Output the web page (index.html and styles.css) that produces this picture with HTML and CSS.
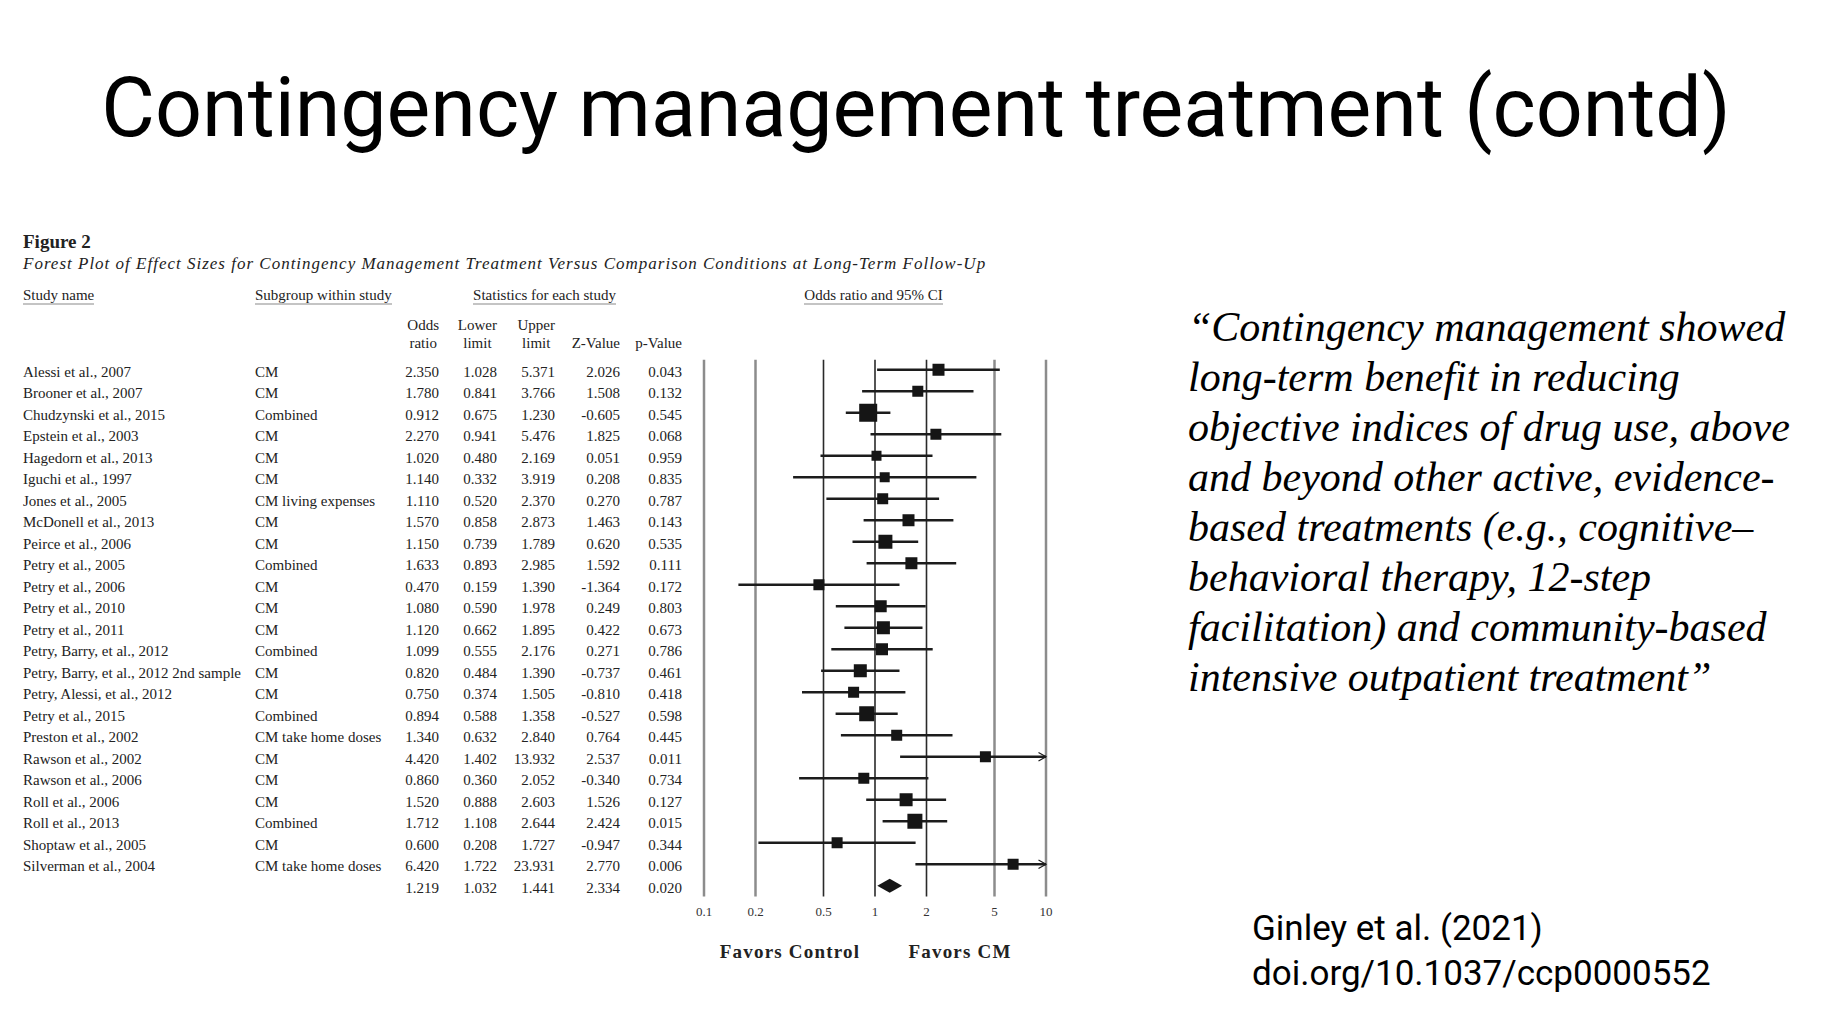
FILE: index.html
```html
<!DOCTYPE html>
<html lang="en">
<head>
<meta charset="utf-8">
<title>Contingency management treatment (contd)</title>
<link rel="stylesheet" href="styles.css">
</head>
<body>
<h1 class="title">Contingency management treatment (contd)</h1>
<main class="content">
  <figure class="fig">
    <div class="fig-label">Figure 2</div>
    <div class="fig-caption">Forest Plot of Effect Sizes for Contingency Management Treatment Versus Comparison Conditions at Long-Term Follow-Up</div>
    <div class="fig-body">
      <div class="tbl">
        <div class="h1"><span class="ul">Study name</span></div>
        <div class="h1"><span class="ul">Subgroup within study</span></div>
        <div class="h1 stats"><span class="ul">Statistics for each study</span></div>

        <div class="h2"></div>
        <div class="h2"></div>
        <div class="h2 v"><span class="hd">Odds<br>ratio</span></div>
        <div class="h2 v"><span class="hd">Lower<br>limit</span></div>
        <div class="h2 v"><span class="hd">Upper<br>limit</span></div>
        <div class="h2 v"><span class="hd low">Z-Value</span></div>
        <div class="h2 v"><span class="hd low">p-Value</span></div>

        <div class="n">Alessi et al., 2007</div><div class="s">CM</div><div class="v">2.350</div><div class="v">1.028</div><div class="v">5.371</div><div class="v">2.026</div><div class="v">0.043</div>
        <div class="n">Brooner et al., 2007</div><div class="s">CM</div><div class="v">1.780</div><div class="v">0.841</div><div class="v">3.766</div><div class="v">1.508</div><div class="v">0.132</div>
        <div class="n">Chudzynski et al., 2015</div><div class="s">Combined</div><div class="v">0.912</div><div class="v">0.675</div><div class="v">1.230</div><div class="v">-0.605</div><div class="v">0.545</div>
        <div class="n">Epstein et al., 2003</div><div class="s">CM</div><div class="v">2.270</div><div class="v">0.941</div><div class="v">5.476</div><div class="v">1.825</div><div class="v">0.068</div>
        <div class="n">Hagedorn et al., 2013</div><div class="s">CM</div><div class="v">1.020</div><div class="v">0.480</div><div class="v">2.169</div><div class="v">0.051</div><div class="v">0.959</div>
        <div class="n">Iguchi et al., 1997</div><div class="s">CM</div><div class="v">1.140</div><div class="v">0.332</div><div class="v">3.919</div><div class="v">0.208</div><div class="v">0.835</div>
        <div class="n">Jones et al., 2005</div><div class="s">CM living expenses</div><div class="v">1.110</div><div class="v">0.520</div><div class="v">2.370</div><div class="v">0.270</div><div class="v">0.787</div>
        <div class="n">McDonell et al., 2013</div><div class="s">CM</div><div class="v">1.570</div><div class="v">0.858</div><div class="v">2.873</div><div class="v">1.463</div><div class="v">0.143</div>
        <div class="n">Peirce et al., 2006</div><div class="s">CM</div><div class="v">1.150</div><div class="v">0.739</div><div class="v">1.789</div><div class="v">0.620</div><div class="v">0.535</div>
        <div class="n">Petry et al., 2005</div><div class="s">Combined</div><div class="v">1.633</div><div class="v">0.893</div><div class="v">2.985</div><div class="v">1.592</div><div class="v">0.111</div>
        <div class="n">Petry et al., 2006</div><div class="s">CM</div><div class="v">0.470</div><div class="v">0.159</div><div class="v">1.390</div><div class="v">-1.364</div><div class="v">0.172</div>
        <div class="n">Petry et al., 2010</div><div class="s">CM</div><div class="v">1.080</div><div class="v">0.590</div><div class="v">1.978</div><div class="v">0.249</div><div class="v">0.803</div>
        <div class="n">Petry et al., 2011</div><div class="s">CM</div><div class="v">1.120</div><div class="v">0.662</div><div class="v">1.895</div><div class="v">0.422</div><div class="v">0.673</div>
        <div class="n">Petry, Barry, et al., 2012</div><div class="s">Combined</div><div class="v">1.099</div><div class="v">0.555</div><div class="v">2.176</div><div class="v">0.271</div><div class="v">0.786</div>
        <div class="n">Petry, Barry, et al., 2012 2nd sample</div><div class="s">CM</div><div class="v">0.820</div><div class="v">0.484</div><div class="v">1.390</div><div class="v">-0.737</div><div class="v">0.461</div>
        <div class="n">Petry, Alessi, et al., 2012</div><div class="s">CM</div><div class="v">0.750</div><div class="v">0.374</div><div class="v">1.505</div><div class="v">-0.810</div><div class="v">0.418</div>
        <div class="n">Petry et al., 2015</div><div class="s">Combined</div><div class="v">0.894</div><div class="v">0.588</div><div class="v">1.358</div><div class="v">-0.527</div><div class="v">0.598</div>
        <div class="n">Preston et al., 2002</div><div class="s">CM take home doses</div><div class="v">1.340</div><div class="v">0.632</div><div class="v">2.840</div><div class="v">0.764</div><div class="v">0.445</div>
        <div class="n">Rawson et al., 2002</div><div class="s">CM</div><div class="v">4.420</div><div class="v">1.402</div><div class="v">13.932</div><div class="v">2.537</div><div class="v">0.011</div>
        <div class="n">Rawson et al., 2006</div><div class="s">CM</div><div class="v">0.860</div><div class="v">0.360</div><div class="v">2.052</div><div class="v">-0.340</div><div class="v">0.734</div>
        <div class="n">Roll et al., 2006</div><div class="s">CM</div><div class="v">1.520</div><div class="v">0.888</div><div class="v">2.603</div><div class="v">1.526</div><div class="v">0.127</div>
        <div class="n">Roll et al., 2013</div><div class="s">Combined</div><div class="v">1.712</div><div class="v">1.108</div><div class="v">2.644</div><div class="v">2.424</div><div class="v">0.015</div>
        <div class="n">Shoptaw et al., 2005</div><div class="s">CM</div><div class="v">0.600</div><div class="v">0.208</div><div class="v">1.727</div><div class="v">-0.947</div><div class="v">0.344</div>
        <div class="n">Silverman et al., 2004</div><div class="s">CM take home doses</div><div class="v">6.420</div><div class="v">1.722</div><div class="v">23.931</div><div class="v">2.770</div><div class="v">0.006</div>
        <div class="n"></div><div class="s"></div><div class="v">1.219</div><div class="v">1.032</div><div class="v">1.441</div><div class="v">2.334</div><div class="v">0.020</div>
      </div>
      <div class="plot">
        <div class="plot-head"><span class="ul">Odds ratio and 95% CI</span></div>
        <svg class="plot-svg" width="383" height="620" viewBox="0 0 383 620" xmlns="http://www.w3.org/2000/svg">
          <g class="axis-light">
            <line x1="22" y1="0.75" x2="22" y2="537.5"/>
            <line x1="73.5" y1="0.75" x2="73.5" y2="537.5"/>
            <line x1="312.5" y1="0.75" x2="312.5" y2="537.5"/>
            <line x1="364" y1="0.75" x2="364" y2="537.5"/>
          </g>
          <g class="axis-dark">
            <line x1="141.5" y1="0.75" x2="141.5" y2="537.5"/>
            <line x1="193" y1="0.75" x2="193" y2="537.5"/>
            <line x1="244.5" y1="0.75" x2="244.5" y2="537.5"/>
          </g>
          <g class="ci">
            <line x1="195.1" y1="10.75" x2="317.8" y2="10.75"/>
            <line x1="180.1" y1="32.25" x2="291.5" y2="32.25"/>
            <line x1="163.8" y1="53.75" x2="208.4" y2="53.75"/>
            <line x1="188.5" y1="75.25" x2="319.3" y2="75.25"/>
            <line x1="138.5" y1="96.75" x2="250.5" y2="96.75"/>
            <line x1="111.1" y1="118.25" x2="294.4" y2="118.25"/>
            <line x1="144.4" y1="139.75" x2="257.1" y2="139.75"/>
            <line x1="181.6" y1="161.25" x2="271.4" y2="161.25"/>
            <line x1="170.5" y1="182.75" x2="236.2" y2="182.75"/>
            <line x1="184.6" y1="204.25" x2="274.2" y2="204.25"/>
            <line x1="56.4" y1="225.75" x2="217.5" y2="225.75"/>
            <line x1="153.8" y1="247.25" x2="243.7" y2="247.25"/>
            <line x1="162.4" y1="268.75" x2="240.5" y2="268.75"/>
            <line x1="149.3" y1="290.25" x2="250.7" y2="290.25"/>
            <line x1="139.1" y1="311.75" x2="217.5" y2="311.75"/>
            <line x1="120.0" y1="333.25" x2="223.4" y2="333.25"/>
            <line x1="153.6" y1="354.75" x2="215.7" y2="354.75"/>
            <line x1="158.9" y1="376.25" x2="270.5" y2="376.25"/>
            <line x1="218.1" y1="397.75" x2="364" y2="397.75"/>
            <line x1="117.1" y1="419.25" x2="246.4" y2="419.25"/>
            <line x1="184.2" y1="440.75" x2="264.1" y2="440.75"/>
            <line x1="200.6" y1="462.25" x2="265.2" y2="462.25"/>
            <line x1="76.4" y1="483.75" x2="233.6" y2="483.75"/>
            <line x1="233.4" y1="505.25" x2="364" y2="505.25"/>
          </g>
          <g class="arrow">
            <path d="M356.5 393.5 L364 397.75 L356.5 402"/>
            <path d="M356.5 501 L364 505.25 L356.5 509.5"/>
          </g>
          <g class="pt">
            <rect x="250.5" y="4.75" width="12" height="12"/>
            <rect x="230.3" y="26.75" width="11" height="11"/>
            <rect x="177.2" y="44.75" width="18" height="18"/>
            <rect x="248.4" y="69.75" width="11" height="11"/>
            <rect x="189.5" y="91.75" width="10" height="10"/>
            <rect x="197.7" y="113.25" width="10" height="10"/>
            <rect x="195.2" y="134.25" width="11" height="11"/>
            <rect x="220.5" y="155.25" width="12" height="12"/>
            <rect x="196.4" y="175.75" width="14" height="14"/>
            <rect x="223.4" y="198.25" width="12" height="12"/>
            <rect x="131.4" y="220.25" width="11" height="11"/>
            <rect x="192.7" y="241.25" width="12" height="12"/>
            <rect x="194.9" y="262.25" width="13" height="13"/>
            <rect x="194.0" y="284.25" width="12" height="12"/>
            <rect x="171.8" y="305.25" width="13" height="13"/>
            <rect x="166.1" y="327.75" width="11" height="11"/>
            <rect x="177.2" y="347.25" width="15" height="15"/>
            <rect x="209.2" y="370.75" width="11" height="11"/>
            <rect x="297.9" y="392.25" width="11" height="11"/>
            <rect x="176.3" y="413.75" width="11" height="11"/>
            <rect x="217.6" y="434.25" width="13" height="13"/>
            <rect x="225.4" y="454.75" width="15" height="15"/>
            <rect x="149.6" y="478.25" width="11" height="11"/>
            <rect x="325.6" y="499.75" width="11" height="11"/>
          </g>
          <path class="diamond" d="M195.3 526.75 L207.7 519.75 L220.1 526.75 L207.7 533.75 Z"/>
          <g class="tick">
            <text x="22" y="552.75">0.1</text>
            <text x="73.5" y="552.75">0.2</text>
            <text x="141.5" y="552.75">0.5</text>
            <text x="193" y="552.75">1</text>
            <text x="244.5" y="552.75">2</text>
            <text x="312.5" y="552.75">5</text>
            <text x="364" y="552.75">10</text>
          </g>
          <g class="favors">
            <text x="108" y="592.75">Favors Control</text>
            <text x="278" y="592.75">Favors CM</text>
          </g>
        </svg>
      </div>
    </div>
  </figure>
  <aside class="side">
    <blockquote class="quote">“Contingency management showed<br>long-term benefit in reducing<br>objective indices of drug use, above<br>and beyond other active, evidence-<br>based treatments (e.g., cognitive–<br>behavioral therapy, 12-step<br>facilitation) and community-based<br>intensive outpatient treatment”</blockquote>
    <p class="cite">Ginley et al. (2021)<br>doi.org/10.1037/ccp0000552</p>
  </aside>
</main>
</body>
</html>
```

FILE: styles.css
```css
html, body {
  margin: 0;
  padding: 0;
}
body {
  width: 1832px;
  height: 1021px;
  overflow: hidden;
  background: #ffffff;
  color: #000000;
  font-family: "Liberation Serif", "Times New Roman", serif;
}

.title {
  margin: 0;
  padding-top: 58px;
  font-family: Roboto, "Liberation Sans", sans-serif;
  font-weight: 400;
  font-size: 82.5px;
  line-height: 100px;
  text-align: center;
  color: #000;
}

.content {
  display: flex;
  align-items: flex-start;
  padding-left: 23px;
  margin-top: 73px;
}

/* ---------- figure ---------- */
.fig {
  margin: 0;
  width: 1042px;
  color: #222222;
}
.fig-label {
  font-size: 19px;
  font-weight: 700;
  line-height: 22px;
}
.fig-caption {
  font-size: 17px;
  font-style: italic;
  line-height: 22px;
  letter-spacing: 1px;
  white-space: nowrap;
}
.fig-body {
  display: flex;
  align-items: flex-start;
}

.tbl {
  display: grid;
  grid-template-columns: 232px 140px 44px 58px 58px 65px 62px;
  align-content: start;
  font-size: 15px;
  line-height: 21.5px;
  width: 659px;
}
.ul {
  border-bottom: 2px solid #c4c4c4;
}
.h1 {
  box-sizing: border-box;
  height: 41px;
  padding-top: 11px;
  line-height: 18px;
  white-space: nowrap;
}
.h1.stats {
  grid-column: 3 / 8;
  text-align: center;
  padding-left: 12px;
}
.h2 {
  box-sizing: border-box;
  height: 45.5px;
  line-height: 18px;
}
.hd {
  display: inline-block;
  text-align: center;
}
.hd.low {
  padding-top: 18px;
}
.n, .s {
  white-space: nowrap;
  height: 21.5px;
}
.v {
  text-align: right;
  white-space: nowrap;
  height: 21.5px;
}

/* ---------- plot ---------- */
.plot {
  width: 383px;
  display: flex;
  flex-direction: column;
}
.plot-head {
  box-sizing: border-box;
  height: 84.25px;
  padding-top: 11px;
  font-size: 15px;
  line-height: 18px;
  text-align: center;
}
.plot-svg {
  display: block;
  overflow: visible;
}
.axis-light line {
  stroke: #8c8c8c;
  stroke-width: 2.5;
}
.axis-dark line {
  stroke: #2a2a2a;
  stroke-width: 1.6;
}
.ci line {
  stroke: #1c1c1c;
  stroke-width: 2.6;
}
.arrow path {
  fill: none;
  stroke: #1c1c1c;
  stroke-width: 1.2;
}
.pt rect,
.diamond {
  fill: #151515;
}
.tick text {
  font-family: "Liberation Serif", serif;
  font-size: 13px;
  fill: #333;
  text-anchor: middle;
  dominant-baseline: central;
}
.favors text {
  font-family: "Liberation Serif", serif;
  font-size: 19px;
  font-weight: 700;
  fill: #222;
  text-anchor: middle;
  dominant-baseline: central;
  letter-spacing: 1.2px;
}

/* ---------- quote + citation ---------- */
.side {
  margin-left: 123px;
  padding-top: 71px;
}
.quote {
  margin: 0;
  font-family: "Liberation Serif", "Times New Roman", serif;
  font-style: italic;
  font-size: 42px;
  line-height: 50px;
  white-space: nowrap;
  color: #000;
}
.cite {
  margin: 203.5px 0 0 64px;
  font-family: Roboto, "Liberation Sans", sans-serif;
  font-size: 35px;
  line-height: 45px;
  white-space: nowrap;
  color: #000;
}
```
